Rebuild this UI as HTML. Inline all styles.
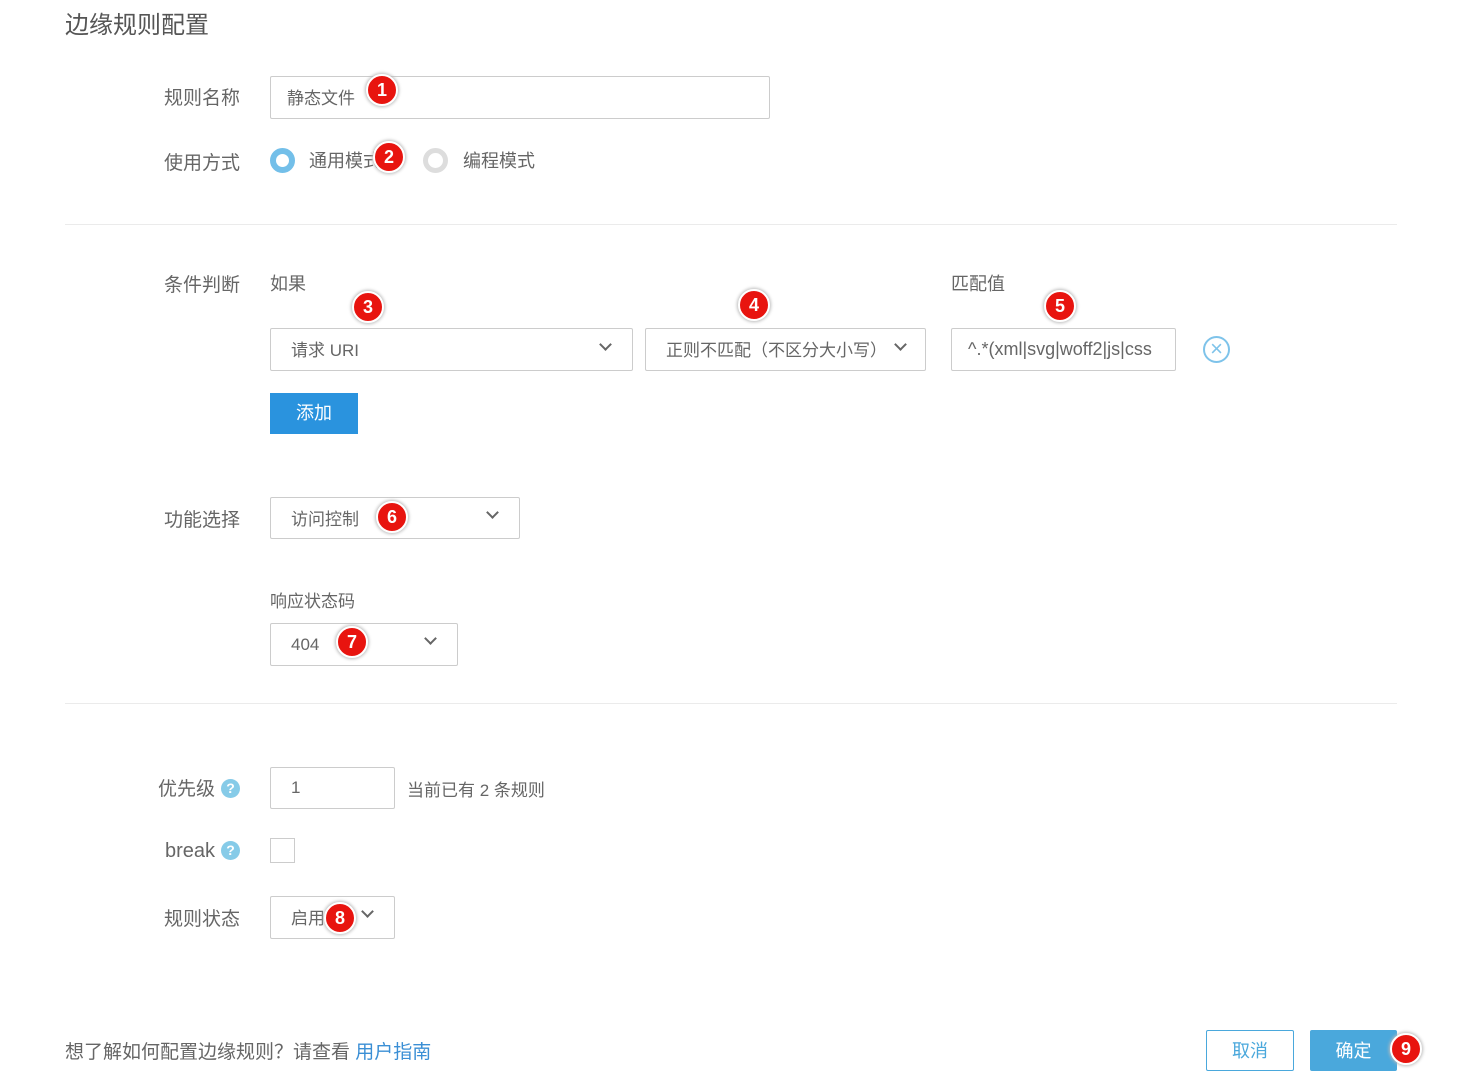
<!DOCTYPE html>
<html><head><meta charset="utf-8"><style>
*{box-sizing:border-box;margin:0;padding:0}
body{width:1461px;height:1079px;background:#fff;position:relative;overflow:hidden;font-family:"Liberation Sans","Noto Sans CJK SC",sans-serif;color:#666;font-size:18px}
.a{position:absolute;white-space:nowrap}
.lbl{position:absolute;width:240px;left:0;text-align:right;font-size:19px;color:#666}
.box{position:absolute;border:1px solid #ccc;background:#fff;border-radius:2px;font-size:17px;color:#666;padding-left:20px;display:flex;align-items:center;overflow:hidden;white-space:nowrap}
.chev{position:absolute;width:9px;height:9px;border-right:2px solid #666;border-bottom:2px solid #666;transform:rotate(45deg)}
.b{position:absolute;width:32px;height:32px;border-radius:50%;background:#e8140f;border:2px solid #fff;box-shadow:0 0 3px 1px #bbb;color:#fff;font-weight:bold;font-size:18px;text-align:center;line-height:28px;font-family:"Liberation Sans",sans-serif}
.hr{position:absolute;left:65px;width:1332px;height:1px;background:#ebebeb}
.q{display:inline-block;width:19px;height:19px;border-radius:50%;background:#86cbe8;color:#fff;font-size:14px;font-weight:bold;text-align:center;line-height:19px;vertical-align:2px;margin-left:6px}
</style></head><body>
<div class="a" style="left:65px;top:5px;font-size:24px;color:#555">边缘规则配置</div>

<div class="lbl" style="top:83px">规则名称</div>
<div class="box" style="left:270px;top:76px;width:500px;height:43px;padding-left:16px;padding-bottom:2px">静态文件</div>
<div class="b" style="left:366px;top:74px">1</div>

<div class="lbl" style="top:148px">使用方式</div>
<div class="a" style="left:270px;top:148px;width:25px;height:25px;border-radius:50%;border:6px solid #73bfe9;background:#fff"></div>
<div class="a" style="left:309px;top:147px;font-size:18px">通用模式</div>
<div class="b" style="left:373px;top:141px">2</div>
<div class="a" style="left:423px;top:148px;width:25px;height:25px;border-radius:50%;border:5px solid #ddd"></div>
<div class="a" style="left:463px;top:147px;font-size:18px">编程模式</div>

<div class="hr" style="top:224px"></div>

<div class="lbl" style="top:270px">条件判断</div>
<div class="a" style="left:270px;top:270px;font-size:18px">如果</div>
<div class="a" style="left:951px;top:270px;font-size:18px">匹配值</div>
<div class="b" style="left:352px;top:291px">3</div>
<div class="b" style="left:738px;top:289px">4</div>
<div class="b" style="left:1044px;top:290px">5</div>
<div class="box" style="left:270px;top:328px;width:363px;height:43px;padding-bottom:2px">请求 URI</div>
<div class="chev" style="left:601px;top:340px"></div>
<div class="box" style="left:645px;top:328px;width:281px;height:43px;padding-bottom:2px">正则不匹配（不区分大小写）</div>
<div class="chev" style="left:896px;top:340px"></div>
<div class="box" style="left:951px;top:328px;width:225px;height:43px;padding-left:16px;font-size:18px">^.*(xml|svg|woff2|js|css</div>
<div class="a" style="left:1203px;top:336px;width:27px;height:27px;border-radius:50%;border:2px solid #7ec3ea;color:#7ec3ea;text-align:center;line-height:22px;font-size:22px">×</div>
<div class="a" style="left:270px;top:393px;width:88px;height:41px;background:#2a93de;color:#fff;font-size:18px;text-align:center;line-height:41px">添加</div>

<div class="lbl" style="top:505px">功能选择</div>
<div class="box" style="left:270px;top:497px;width:250px;height:42px;padding-bottom:2px">访问控制</div>
<div class="chev" style="left:488px;top:508px"></div>
<div class="b" style="left:376px;top:501px">6</div>

<div class="a" style="left:270px;top:587px;font-size:17px">响应状态码</div>
<div class="box" style="left:270px;top:623px;width:188px;height:43px">404</div>
<div class="chev" style="left:426px;top:634px"></div>
<div class="b" style="left:336px;top:626px">7</div>

<div class="hr" style="top:703px"></div>

<div class="lbl" style="top:774px">优先级<span class="q">?</span></div>
<div class="box" style="left:270px;top:767px;width:125px;height:42px">1</div>
<div class="a" style="left:407px;top:776px;font-size:17px">当前已有 2 条规则</div>

<div class="lbl" style="top:840px;font-size:20px">break<span class="q">?</span></div>
<div class="a" style="left:270px;top:838px;width:25px;height:25px;border:1px solid #ccc"></div>

<div class="lbl" style="top:904px">规则状态</div>
<div class="box" style="left:270px;top:896px;width:125px;height:43px;padding-bottom:2px">启用</div>
<div class="chev" style="left:363px;top:907px"></div>
<div class="b" style="left:324px;top:902px">8</div>

<div class="a" style="left:65px;top:1037px;font-size:19px">想了解如何配置边缘规则？请查看 <span style="color:#3b8fd5">用户指南</span></div>
<div class="a" style="left:1206px;top:1030px;width:88px;height:41px;border:1px solid #4aa8dc;border-radius:2px;color:#4aa8dc;text-align:center;line-height:41px;font-size:18px">取消</div>
<div class="a" style="left:1310px;top:1030px;width:87px;height:41px;background:#4aa8dc;border-radius:2px;color:#fff;text-align:center;line-height:43px;font-size:18px">确定</div>
<div class="b" style="left:1390px;top:1033px">9</div>
</body></html>
